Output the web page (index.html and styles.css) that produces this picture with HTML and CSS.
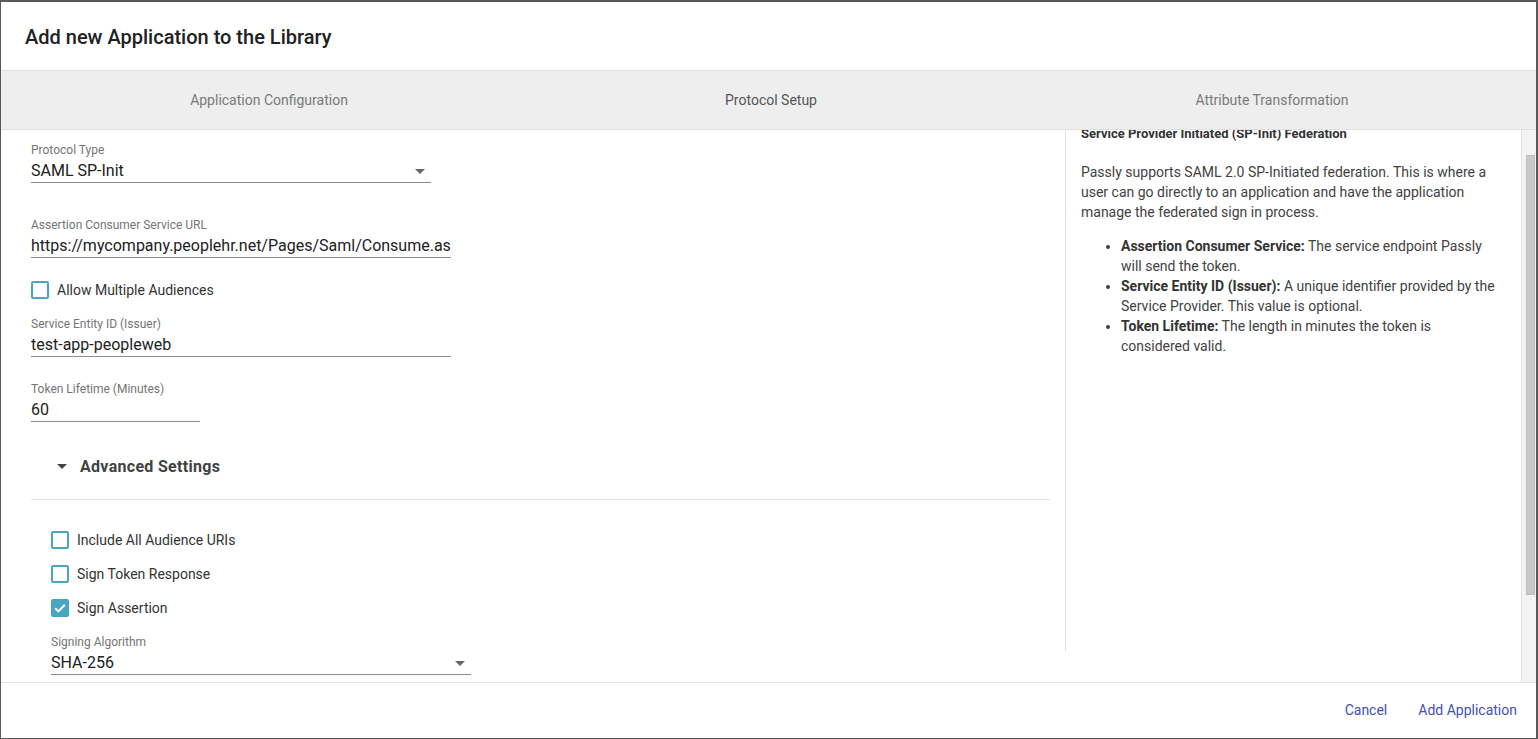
FILE: index.html
```html
<!DOCTYPE html>
<html lang="en">
<head>
<meta charset="utf-8">
<title>Add new Application to the Library</title>
<link rel="stylesheet" href="styles.css">
</head>
<body>
<div class="dialog">
  <header class="header">
    <h1 class="title">Add new Application to the Library</h1>
  </header>
  <nav class="tabs">
    <div class="tab">Application Configuration</div>
    <div class="tab active">Protocol Setup</div>
    <div class="tab">Attribute Transformation</div>
  </nav>
  <main class="body">
    <section class="form">
      <div class="field f-protocol">
        <div class="label">Protocol Type</div>
        <div class="control select w400"><span class="value">SAML SP-Init</span><span class="caret"></span></div>
      </div>
      <div class="field f-acs">
        <div class="label">Assertion Consumer Service URL</div>
        <div class="control w420"><span class="value">https://mycompany.peoplehr.net/Pages/Saml/Consume.aspx</span></div>
      </div>
      <label class="check f-allow"><span class="box"></span><span class="check-label">Allow Multiple Audiences</span></label>
      <div class="field f-issuer">
        <div class="label">Service Entity ID (Issuer)</div>
        <div class="control w420"><span class="value">test-app-peopleweb</span></div>
      </div>
      <div class="field f-token">
        <div class="label">Token Lifetime (Minutes)</div>
        <div class="control w169"><span class="value">60</span></div>
      </div>
      <div class="advanced">
        <span class="adv-caret"></span>
        <span class="adv-title">Advanced Settings</span>
      </div>
      <div class="advanced-body">
        <label class="check"><span class="box"></span><span class="check-label">Include All Audience URIs</span></label>
        <label class="check"><span class="box"></span><span class="check-label">Sign Token Response</span></label>
        <label class="check"><span class="box checked"><svg viewBox="0 0 18 18" width="18" height="18"><path d="M4.2 9.2l3.2 3.2 6.4-6.6" fill="none" stroke="#fff" stroke-width="2"/></svg></span><span class="check-label">Sign Assertion</span></label>
        <div class="field f-sign">
          <div class="label">Signing Algorithm</div>
          <div class="control select w420"><span class="value">SHA-256</span><span class="caret"></span></div>
        </div>
      </div>
    </section>
    <aside class="help">
      <h2 class="help-title">Service Provider Initiated (SP-Init) Federation</h2>
      <p class="help-text">Passly supports SAML 2.0 SP-Initiated federation. This is where a user can go directly to an application and have the application manage the federated sign in process.</p>
      <ul class="help-list">
        <li><b>Assertion Consumer Service:</b> The service endpoint Passly will send the token.</li>
        <li><b>Service Entity ID (Issuer):</b> A unique identifier provided by the Service Provider. This value is optional.</li>
        <li><b>Token Lifetime:</b> The length in minutes the token is considered valid.</li>
      </ul>
    </aside>
    <div class="scrollbar"><div class="thumb"></div></div>
  </main>
  <footer class="footer">
    <button class="btn">Cancel</button>
    <button class="btn">Add Application</button>
  </footer>
</div>
</body>
</html>
```
FILE: styles.css
```css
* { box-sizing: border-box; }
html, body { margin: 0; padding: 0; }
body {
  background: #595959;
  font-family: Roboto, "Liberation Sans", Arial, sans-serif;
  width: 1538px;
  height: 739px;
  overflow: hidden;
}
.dialog {
  margin: 2px 2px 1px 1px;
  width: 1535px;
  height: 736px;
  background: #fff;
  display: flex;
  flex-direction: column;
}
.header {
  height: 69px;
  flex: none;
  display: flex;
  align-items: center;
  padding-left: 24px;
  padding-top: 1px;
  border-bottom: 1px solid #e0e0e0;
}
.title {
  margin: 0;
  font-size: 20px;
  font-weight: 500;
  color: #212121;
}
.tabs {
  height: 59px;
  flex: none;
  background: #eeeeee;
  border-bottom: 1px solid #e0e0e0;
  display: grid;
  grid-template-columns: 502px 502px 500px;
  padding-left: 17px;
}
.tab {
  display: flex;
  align-items: center;
  justify-content: center;
  font-size: 14px;
  color: #7a7a7a;
}
.tab.active { color: #555; }
.body {
  flex: 1;
  display: flex;
  overflow: hidden;
}
.form {
  width: 1064px;
  flex: none;
  padding: 13px 15px 0 30px;
}
.field { display: block; }
.label {
  font-size: 12px;
  line-height: 14px;
  color: #757575;
}
.control {
  margin-top: 3px;
  height: 23px;
  padding-top: 1px;
  padding-bottom: 1px;
  border-bottom: 1px solid #8f8f8f;
  display: flex;
  align-items: center;
  overflow: hidden;
  white-space: nowrap;
}
.value {
  font-size: 16px;
  line-height: 20px;
  color: #212121;
}
.w400 { width: 400px; }
.w420 { width: 420px; }
.w169 { width: 169px; }
.select { justify-content: space-between; padding-right: 6px; }
.caret {
  width: 0; height: 0;
  border-left: 5px solid transparent;
  border-right: 5px solid transparent;
  border-top: 5px solid #666;
}
.f-acs { margin-top: 35px; }
.check {
  display: flex;
  align-items: center;
  height: 18px;
  gap: 8px;
}
.f-allow { margin-top: 23px; }
.f-issuer { margin-top: 18px; }
.f-token { margin-top: 25px; }
.box {
  width: 18px;
  height: 18px;
  border: 2px solid #48a7c0;
  border-radius: 2px;
  flex: none;
  display: flex;
}
.box.checked { background: #48a7c0; border: none; }
.check-label {
  font-size: 14px;
  color: #333;
}
.advanced {
  margin-top: 32px;
  height: 24px;
  display: flex;
  align-items: center;
  padding-left: 26px;
}
.adv-caret {
  width: 0; height: 0;
  border-left: 5px solid transparent;
  border-right: 5px solid transparent;
  border-top: 5px solid #444;
  margin-right: 13px;
}
.adv-title {
  font-size: 16px;
  font-weight: 700;
  letter-spacing: 0.3px;
  color: #424242;
}
.advanced-body {
  margin-top: 21px;
  border-top: 1px solid #e5e5e5;
  padding-left: 20px;
  padding-top: 31px;
  display: flex;
  flex-direction: column;
  gap: 16px;
}
.f-sign { margin-top: 2px; }
.help {
  width: 456px;
  height: 521px;
  flex: none;
  border-left: 1px solid #e0e0e0;
  padding: 0 23px 0 15px;
  overflow: hidden;
  color: #424242;
}
.help-title {
  margin: -4px 0 0;
  font-size: 13px;
  line-height: 16px;
  font-weight: 700;
  color: #333;
}
.help-text {
  margin: 20px 0 0;
  font-size: 14px;
  line-height: 20px;
}
.help-list {
  margin: 14px 0 0;
  padding-left: 40px;
  font-size: 14px;
  line-height: 20px;
}
.help-list b { color: #333; }
.scrollbar {
  width: 15px;
  flex: none;
  background: #f3f3f3;
  border-left: 1px solid #e2e2e2;
  padding: 25px 1px 0 4px;
}
.thumb {
  height: 440px;
  background: #c9c9c9;
  border: 1px solid #bdbdbd;
}
.footer {
  height: 56px;
  flex: none;
  border-top: 1px solid #e0e0e0;
  display: flex;
  justify-content: flex-end;
  align-items: center;
  gap: 15px;
  padding-right: 11px;
  padding-bottom: 1px;
}
.btn {
  background: none;
  border: none;
  font-family: Roboto, "Liberation Sans", Arial, sans-serif;
  font-size: 14px;
  color: #3f51b5;
  padding: 6px 8px;
  cursor: pointer;
}
```
